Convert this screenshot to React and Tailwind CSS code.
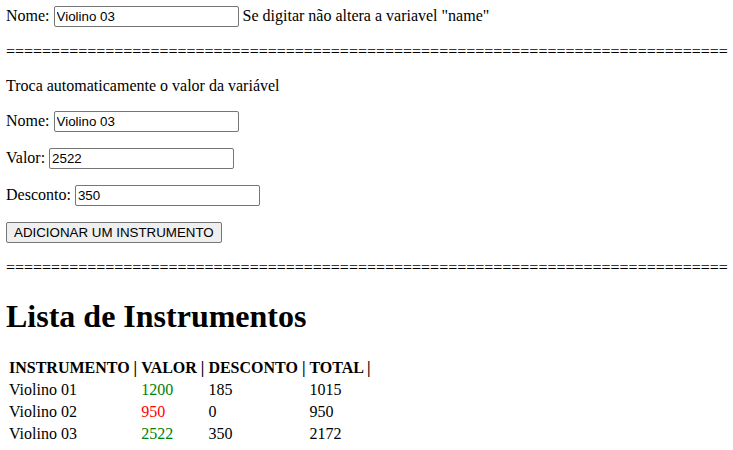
export default function App() {
  const instrumentos = [
    { nome: "Violino 01", valor: 1200, desconto: 185 },
    { nome: "Violino 02", valor: 950, desconto: 0 },
    { nome: "Violino 03", valor: 2522, desconto: 350 },
  ];

  const separador = "=".repeat(80);

  const inputCls =
    "border border-[#767676] rounded-[2px] px-[2px] py-px text-[13.333px] leading-[normal] font-['Liberation_Sans',Arial,sans-serif] text-black bg-white w-[185px] h-[21px] align-baseline";

  return (
    <div className="px-1.5 pt-1.5 pb-2 font-['Liberation_Serif','Times_New_Roman',serif] text-base text-black bg-white min-h-[450px] leading-[normal]">
      <div>
        Nome: <input className={inputCls} defaultValue="Violino 03" /> Se digitar não altera a variavel "name"
      </div>
      <p className="my-4 whitespace-nowrap">{separador}</p>
      <p className="my-4">Troca automaticamente o valor da variável</p>
      <p className="my-4">
        Nome: <input className={inputCls} defaultValue="Violino 03" />
      </p>
      <p className="my-4">
        Valor: <input className={inputCls} defaultValue="2522" />
      </p>
      <p className="my-4">
        Desconto: <input className={inputCls} defaultValue="350" />
      </p>
      <button className="border border-[#767676] rounded-[2px] bg-[#efefef] px-[7px] py-[2px] text-[13.333px] leading-[normal] font-['Liberation_Sans',Arial,sans-serif]">
        ADICIONAR UM INSTRUMENTO
      </button>
      <p className="my-4 whitespace-nowrap">{separador}</p>
      <h1 className="text-[32px] leading-[normal] font-bold my-[21px]">Lista de Instrumentos</h1>
      <table className="border-separate border-spacing-[2px]">
        <thead>
          <tr>
            <th className="p-px text-left">INSTRUMENTO |</th>
            <th className="p-px text-left">VALOR |</th>
            <th className="p-px text-left">DESCONTO |</th>
            <th className="p-px text-left">TOTAL |</th>
          </tr>
        </thead>
        <tbody>
          {instrumentos.map((i) => (
            <tr key={i.nome}>
              <td className="p-px">{i.nome}</td>
              <td className={`p-px ${i.valor > 1000 ? "text-[#008000]" : "text-[#ff0000]"}`}>{i.valor}</td>
              <td className="p-px">{i.desconto}</td>
              <td className="p-px">{i.valor - i.desconto}</td>
            </tr>
          ))}
        </tbody>
      </table>
    </div>
  );
}
